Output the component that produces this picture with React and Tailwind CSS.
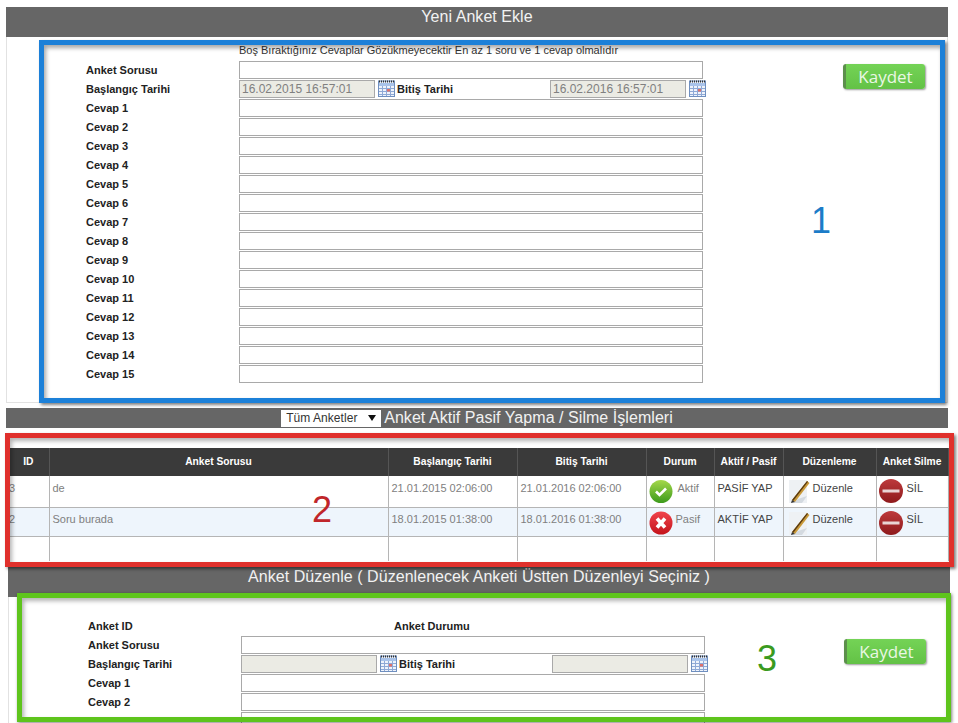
const sans = { fontFamily: '"Liberation Sans", Arial, sans-serif' };

function CalendarIcon() {
  return (
    <svg width="17" height="17" viewBox="0 0 17 17" className="shrink-0">
      <rect x="0.5" y="1" width="16" height="15.5" fill="#eef3fb" stroke="#6f8fbf" />
      <path d="M1 1.5h15" stroke="#333" strokeWidth="2" strokeDasharray="1 1" />
      <rect x="1" y="3" width="15" height="3" fill="#a9c3ea" />
      <path d="M1 8.5h15M1 11.5h15M1 14.5h15M4.5 6v10M8.5 6v10M12.5 6v10" stroke="#8fa9d6" strokeWidth="1" />
      <rect x="9" y="9" width="3" height="2.5" fill="#e0706c" />
    </svg>
  );
}

function KaydetButton({ className }) {
  return (
    <div
      className={`flex h-[25px] w-[82px] shrink-0 items-center justify-center rounded-[3px] border-l-[3px] border-[#5c8f4c] bg-gradient-to-b from-[#74d356] to-[#63c246] text-[17px] text-[#eaf7e4] shadow-[1px_1px_2px_rgba(0,0,0,0.4)] ${className}`}
      style={{ fontFamily: '"Open Sans", sans-serif' }}
    >
      Kaydet
    </div>
  );
}

function TextBox({ className = 'w-[464px]', value }) {
  return (
    <div className={`h-[18px] shrink-0 border border-[#a9a9a9] text-[12px] leading-[16px] text-[#808080] ${className}`}>
      {value && <span className="pl-[2px]">{value}</span>}
    </div>
  );
}

function Row({ label, children }) {
  return (
    <div className="flex h-[19px] items-start">
      <div className="w-[153px] shrink-0 text-[11px] font-bold leading-[19px] text-[#222]">{label}</div>
      {children}
    </div>
  );
}

function DateRow({ start, end }) {
  return (
    <Row label="Başlangıç Tarihi">
      <div className="flex items-start">
        <TextBox className="w-[136px] bg-[#ebebe4]" value={start} />
        <div className="ml-[3px]"><CalendarIcon /></div>
        <div className="ml-[2px] w-[153px] text-[11px] font-bold leading-[19px] text-[#222]">Bitiş Tarihi</div>
        <TextBox className="w-[136px] bg-[#ebebe4]" value={end} />
        <div className="ml-[3px]"><CalendarIcon /></div>
      </div>
    </Row>
  );
}

function CheckIcon() {
  return (
    <svg width="24" height="24" viewBox="0 0 24 24" className="shrink-0">
      <defs>
        <linearGradient id="chk" x1="0" y1="0" x2="0" y2="1">
          <stop offset="0" stopColor="#a5d84a" />
          <stop offset="1" stopColor="#3c9a1c" />
        </linearGradient>
      </defs>
      <circle cx="12" cy="12.5" r="11.5" fill="url(#chk)" />
      <path d="M7 12.5l3.5 3.5L17 9.5" fill="none" stroke="#fff" strokeWidth="2.6" />
    </svg>
  );
}

function CrossIcon() {
  return (
    <svg width="24" height="24" viewBox="0 0 24 24" className="shrink-0">
      <defs>
        <linearGradient id="crs" x1="0" y1="0" x2="0" y2="1">
          <stop offset="0" stopColor="#f0444c" />
          <stop offset="1" stopColor="#c4141c" />
        </linearGradient>
      </defs>
      <circle cx="12" cy="12" r="11.5" fill="url(#crs)" />
      <path d="M8 7.5l8 9M16 7.5l-8 9" fill="none" stroke="#fff" strokeWidth="3.6" />
    </svg>
  );
}

function PencilIcon() {
  return (
    <svg width="24" height="25" viewBox="0 0 24 25" className="shrink-0">
      <rect x="1" y="1" width="18" height="23" fill="#eef1f4" />
      <path d="M5 24l5-4 9-3-5 7z" fill="#d4dae0" />
      <path d="M4 21L19 2l2.5 2L7 23z" fill="#c99a3a" />
      <path d="M4 21L19 2l1 .8L5.2 22z" fill="#5a3a10" />
      <path d="M3 24l1-3 3 2z" fill="#333" />
    </svg>
  );
}

function MinusIcon() {
  return (
    <svg width="24" height="24" viewBox="0 0 24 24" className="shrink-0">
      <defs>
        <linearGradient id="mns" x1="0" y1="0" x2="0" y2="1">
          <stop offset="0" stopColor="#bd3a3c" />
          <stop offset="1" stopColor="#8e1a1c" />
        </linearGradient>
      </defs>
      <circle cx="12" cy="12" r="12" fill="url(#mns)" />
      <rect x="3.5" y="10.5" width="17" height="3" fill="#e9d5d5" />
    </svg>
  );
}

const columns = [
  ['ID', 'w-[41px]'],
  ['Anket Sorusu', 'w-[339px]'],
  ['Başlangıç Tarihi', 'w-[129px]'],
  ['Bitiş Tarihi', 'w-[129px]'],
  ['Durum', 'w-[68px]'],
  ['Aktif / Pasif', 'w-[69px]'],
  ['Düzenleme', 'w-[93px]'],
  ['Anket Silme', 'w-[72px]'],
];

const polls = [
  { id: 3, q: 'de', start: '21.01.2015 02:06:00', end: '21.01.2016 02:06:00', active: true, h: 'h-[31px]', bg: 'bg-white', pad: 'pt-[6px]', lift: '-mt-[3px]' },
  { id: 2, q: 'Soru burada', start: '18.01.2015 01:38:00', end: '18.01.2016 01:38:00', active: false, h: 'h-[29px]', bg: 'bg-[#eef5fc]', pad: 'pt-[5px]', lift: '-mt-[2px]' },
];

const cell = 'border-r border-b border-[#b5b5b5] px-[3px] align-top text-[11px] leading-[13px]';

function PollTable() {
  return (
    <table className="ml-[2px] w-[940px] table-fixed border-collapse">
      <thead>
        <tr className="h-[28px] bg-[#3a3a3a]">
          {columns.map(([name, w]) => (
            <th key={name} className={`${w} border-r border-[#555] p-0 text-center text-[10.25px] font-bold text-white`}>{name}</th>
          ))}
        </tr>
      </thead>
      <tbody>
        {polls.map((p) => (
          <tr key={p.id} className={`${p.h} ${p.bg}`}>
            <td className={`${cell} ${p.pad} !pl-px text-[#808080]`}>{p.id}</td>
            <td className={`${cell} ${p.pad} text-[#808080]`}>{p.q}</td>
            <td className={`${cell} ${p.pad} text-[#808080]`}>{p.start}</td>
            <td className={`${cell} ${p.pad} text-[#808080]`}>{p.end}</td>
            <td className={`${cell} ${p.pad} text-[#808080]`}>
              <div className="-ml-px flex items-start gap-[3px]">
                <div className={`-mb-[6px] ${p.lift}`}>{p.active ? <CheckIcon /> : <CrossIcon />}</div>
                <span className={p.active ? 'ml-[2px]' : ''}>{p.active ? 'Aktif' : 'Pasif'}</span>
              </div>
            </td>
            <td className={`${cell} ${p.pad} text-[#444]`}>{p.active ? 'PASİF YAP' : 'AKTİF YAP'}</td>
            <td className={`${cell} ${p.pad} text-[#444]`}>
              <div className="flex items-start gap-[1px] pl-[1px]">
                <div className={`-mb-[6px] ${p.lift}`}><PencilIcon /></div>
                <span>Düzenle</span>
              </div>
            </td>
            <td className={`${cell} ${p.pad} text-[#444]`}>
              <div className="-ml-px flex items-start gap-[4px]">
                <div className={`-mb-[6px] ${p.lift}`}><MinusIcon /></div>
                <span>SİL</span>
              </div>
            </td>
          </tr>
        ))}
        <tr className="h-[25px] bg-white">
          {columns.map(([name]) => (
            <td key={name} className="border-r border-[#b5b5b5]" />
          ))}
        </tr>
      </tbody>
    </table>
  );
}

function Header({ className = '', children }) {
  return (
    <div className={`flex items-center justify-center bg-[#666] text-[16px] tracking-[0.05px] text-[#f2f2f2] ${className}`}>
      {children}
    </div>
  );
}

export default function App() {
  const answers = Array.from({ length: 15 }, (_, i) => `Cevap ${i + 1}`);

  return (
    <div className="relative h-[723px] w-[958px] overflow-hidden bg-white" style={sans}>
      {/* Yeni anket */}
      <section className="ml-[6px] mt-[7px] w-[942px]">
        <Header className="h-[30px] pb-[10px]">Yeni Anket Ekle</Header>
        <div className="flex h-[366px] border border-t-0 border-[#e2e2e2] pl-[79px]">
          <div>
            <div className="h-[24px] pl-[153px] pt-[7px] text-[11px] leading-[13px] text-[#333]">
              Boş Bıraktığınız Cevaplar Gözükmeyecektir En az 1 soru ve 1 cevap olmalıdır
            </div>
            <Row label="Anket Sorusu"><TextBox /></Row>
            <DateRow start="16.02.2015 16:57:01" end="16.02.2016 16:57:01" />
            {answers.map((a) => (
              <Row key={a} label={a}><TextBox /></Row>
            ))}
          </div>
          <KaydetButton className="ml-[137px] mt-[27px]" />
        </div>
      </section>

      {/* Aktif pasif */}
      <section className="ml-[6px] mt-[5px] w-[942px]">
        <Header className="h-[20px] gap-[3px] bg-[#5f5f5f]">
          <div className="flex h-[17px] w-[100px] items-center justify-between bg-white pl-[5px] pr-[5px] text-[12px] text-[#333]">
            Tüm Anketler
            <svg width="8" height="6" viewBox="0 0 8 6"><path d="M0 0h8L4 6z" fill="#111" /></svg>
          </div>
          <span>Anket Aktif Pasif Yapma / Silme İşlemleri</span>
        </Header>
        <div className="h-[138px] pt-[20px]">
          <PollTable />
        </div>
      </section>

      {/* Duzenle */}
      <section className="ml-[8px] w-[942px]">
        <Header className="h-[31px] pb-[10px]">Anket Düzenle ( Düzenlenecek Anketi Üstten Düzenleyi Seçiniz )</Header>
        <div className="flex h-[130px] border-l border-[#e2e2e2] pl-[79px] pt-[20px]">
          <div>
            <Row label="Anket ID">
              <div className="ml-[153px] text-[11px] font-bold leading-[19px] text-[#222]">Anket Durumu</div>
            </Row>
            <Row label="Anket Sorusu"><TextBox /></Row>
            <DateRow />
            <Row label="Cevap 1"><TextBox /></Row>
            <Row label="Cevap 2"><TextBox /></Row>
            <Row label=""><TextBox /></Row>
          </div>
          <KaydetButton className="ml-[136px] mt-[22px]" />
        </div>
      </section>

      {/* annotation frames drawn on top of the screenshot */}
      <div className="pointer-events-none absolute left-[39px] top-[40px] h-[363px] w-[906px] border-[5px] border-[#1c80d8] shadow-[2px_2px_3px_rgba(0,0,0,0.5),inset_2px_3px_4px_rgba(0,0,0,0.35)]" />
      <div className="absolute left-[811px] top-[200px] text-[36px] leading-[42px] text-[#1c7cc8]">1</div>
      <div className="pointer-events-none absolute left-[5px] top-[433px] h-[134px] w-[949px] border-[5px] border-[#e0302c] shadow-[2px_2px_3px_rgba(0,0,0,0.5),inset_2px_3px_4px_rgba(0,0,0,0.3)]" />
      <div className="absolute left-[312px] top-[489px] text-[36px] leading-[42px] text-[#c0262a]">2</div>
      <div className="pointer-events-none absolute left-[17px] top-[593px] h-[129px] w-[934px] border-[5px] border-[#5ec41c] shadow-[1px_1px_3px_rgba(0,0,0,0.5),inset_2px_3px_4px_rgba(0,0,0,0.3)]" />
      <div className="absolute left-[757px] top-[638px] text-[36px] leading-[42px] text-[#3a9a20]">3</div>
    </div>
  );
}
